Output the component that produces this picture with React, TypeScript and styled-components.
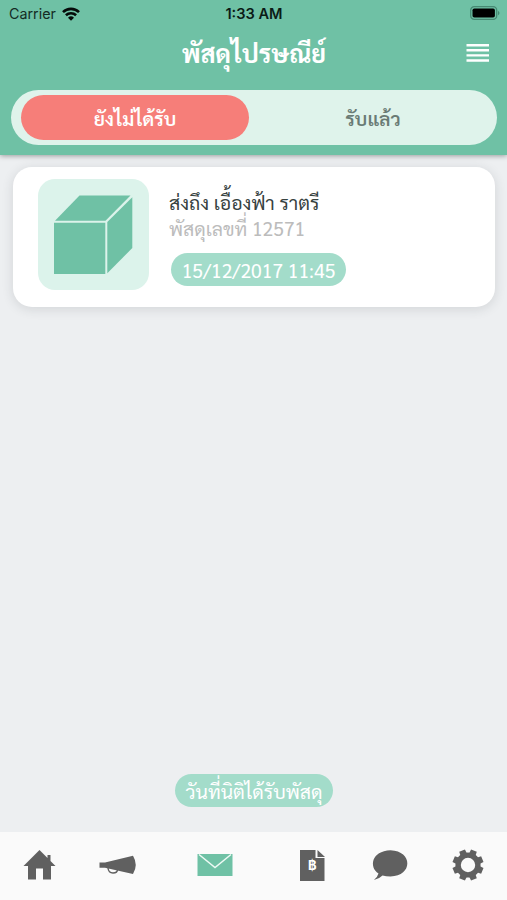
import React from "react";
import styled, { createGlobalStyle } from "styled-components";

const GlobalStyle = createGlobalStyle`
  * { box-sizing: border-box; }
  body { margin: 0; background: #edeff1; font-family: Sarabun, "Noto Sans", sans-serif; }
`;

const Screen = styled.div`
  width: 507px;
  height: 900px;
  display: flex;
  flex-direction: column;
  overflow: hidden;
  background: #edeff1;
`;

const Header = styled.header`
  height: 155px;
  flex: none;
  background: #6fc1a5;
  box-shadow: 0 1px 5px rgba(0, 0, 0, 0.35);
`;

const StatusBar = styled.div`
  height: 28px;
  padding: 0 7px 0 9px;
  display: grid;
  grid-template-columns: 1fr auto 1fr;
  align-items: center;
  font: 14.3px/28px Inter, sans-serif;
  color: #142c24;
`;

const Carrier = styled.div`
  display: flex;
  align-items: center;
  gap: 6px;
`;

const Clock = styled.div`
  font-weight: 600;
  font-size: 14.6px;
  padding-right: 1px;
  color: #0b1b16;
`;

const Battery = styled.svg`
  justify-self: end;
  margin-bottom: 2px;
`;

const TitleBar = styled.div`
  height: 62px;
  padding: 0 17px 12px 18px;
  display: grid;
  grid-template-columns: 24px 1fr 24px;
  align-items: center;
`;

const Label = styled.span<{ $size: number; $color: string; $weight?: number; $line?: number }>`
  display: block;
  font-size: ${(p) => p.$size}px;
  line-height: ${(p) => p.$line ?? 30}px;
  font-weight: ${(p) => p.$weight ?? 400};
  color: ${(p) => p.$color};
  white-space: nowrap;
`;

const Title = styled.h1`
  grid-column: 2;
  margin: 0;
  text-align: center;
`;

const Segments = styled.div`
  height: 55px;
  margin: 0 10px 0 11px;
  padding: 5px 0 5px 10px;
  border-radius: 28px;
  background: #dff3eb;
  display: grid;
  grid-template-columns: 228px 1fr;
`;

const Segment = styled.div<{ $active?: boolean }>`
  border-radius: 23px;
  background: ${(p) => (p.$active ? "#f67e79" : "transparent")};
  display: flex;
  align-items: center;
  justify-content: center;
`;

const Content = styled.main`
  flex: 1;
  padding: 12px 12px 25px 13px;
  display: flex;
  flex-direction: column;
  justify-content: space-between;
  align-items: center;
`;

const Card = styled.article`
  width: 100%;
  height: 140px;
  padding: 12px 25px;
  display: flex;
  gap: 20px;
  border-radius: 19px;
  background: #fff;
  box-shadow: 0 2px 12px rgba(40, 50, 60, 0.14);
`;

const Thumb = styled.div`
  width: 111px;
  height: 111px;
  border-radius: 17px;
  background: #dcf3eb;
`;

const Details = styled.div`
  padding-top: 9px;
`;

const Pill = styled.div<{ $width: number; $height: number }>`
  width: ${(p) => p.$width}px;
  height: ${(p) => p.$height}px;
  border-radius: 17px;
  background: #a3dcca;
  display: flex;
  align-items: center;
  justify-content: center;
`;

const DateRow = styled.div`
  padding: 12px 0 0 2px;
`;

const TabBar = styled.nav`
  height: 68px;
  flex: none;
  background: #fafafa;
  display: flex;
  align-items: center;
`;

const Tab = styled.div<{ $width: number }>`
  width: ${(p) => p.$width}px;
  height: 68px;
`;

const Wifi = () => (
  <svg width="18" height="14" viewBox="0 0 18 14" fill="none" stroke="#050b09" strokeWidth="2.6">
    <path d="M1 5.1A11.5 11.5 0 0 1 17 5.1" />
    <path d="M3.9 8.3A7.4 7.4 0 0 1 14.1 8.3" />
    <path d="M9 13.7L6 10.7A4.3 4.3 0 0 1 12 10.7Z" fill="#050b09" stroke="none" />
  </svg>
);

const gearTeeth = [0, 45, 90, 135, 180, 225, 270, 315];

export default function App() {
  return (
    <>
      <GlobalStyle />
      <Screen>
        <Header>
          <StatusBar>
            <Carrier>Carrier <Wifi /></Carrier>
            <Clock>1:33 AM</Clock>
            <Battery width="30" height="14" viewBox="0 0 30 14">
              <rect x=".7" y=".7" width="26" height="12.6" rx="3.6" fill="none" stroke="#468a73" strokeWidth="1.3" />
              <rect x="2.5" y="2.5" width="22.4" height="9" rx="1.8" fill="#000" />
              <path d="M28 4.7Q31 7 28 9.3Z" fill="#468a73" />
            </Battery>
          </StatusBar>
          <TitleBar>
            <Title><Label $size={25} $weight={700} $color="#fff">พัสดุไปรษณีย์</Label></Title>
            <svg width="24" height="20" viewBox="0 0 24 20" stroke="#fff" strokeWidth="2.4">
              <path d="M.5 2.2H23M.5 7.3H23M.5 12.4H23M.5 17.5H23" />
            </svg>
          </TitleBar>
          <Segments>
            <Segment $active><Label $size={19.3} $weight={600} $color="#fff">ยังไม่ได้รับ</Label></Segment>
            <Segment><Label $size={19.3} $weight={600} $color="#6a7b75">รับแล้ว</Label></Segment>
          </Segments>
        </Header>
        <Content>
          <Card>
            <Thumb>
              <svg width="111" height="111" viewBox="38 179 111 111" fill="#6fc1a5">
                <path d="M55 220.800L79.500 195.500H130.500L105.500 220.800Z" />
                <path d="M54 222.800H105.300V274H54Z" />
                <path d="M107.300 222L132.300 197.300V248L107.300 273.300Z" />
              </svg>
            </Thumb>
            <Details>
              <Label $size={19.4} $line={28} $color="#37423f">ส่งถึง เอื้องฟ้า ราตรี</Label>
              <Label $size={19.4} $line={25} $color="#bcbcbc">พัสดุเลขที่ 12571</Label>
              <DateRow>
                <Pill $width={175} $height={33}><Label $size={19.4} $color="#fff">15/12/2017 11:45</Label></Pill>
              </DateRow>
            </Details>
          </Card>
          <Pill $width={158} $height={33}><Label $size={19.4} $color="#fff">วันที่นิติได้รับพัสดุ</Label></Pill>
        </Content>
        <TabBar>
          <Tab $width={80}>
            <svg width="80" height="68" viewBox="0 832 80 68" fill="#606060">
              <path d="M23.500 866L39.500 850L47.500 858V855H50.500V861L55.500 866H51V879.500H43V868.500H36V879.500H28V866Z" />
            </svg>
          </Tab>
          <Tab $width={80}>
            <svg width="80" height="68" viewBox="80 832 80 68" fill="#606060">
              <path d="M99.500 862.500H105L133 855.800Q138.500 865 133 874L105 867.700H99.500Z" />
              <path d="M108 868Q108.500 873 113 873T117.500 869.500" fill="none" stroke="#606060" strokeWidth="1.4" />
            </svg>
          </Tab>
          <Tab $width={110}>
            <svg width="110" height="68" viewBox="160 832 110 68">
              <rect x="197.500" y="854" width="35" height="22" fill="#6fc1a5" />
              <path d="M199 854.500L215 867.500L231 854.500" fill="none" stroke="#eefaf5" strokeWidth="1.5" />
            </svg>
          </Tab>
          <Tab $width={80}>
            <svg width="80" height="68" viewBox="270 832 80 68" fill="#606060">
              <path d="M300 850H315.500V858H324.500V881H300Z" />
              <path d="M317.500 850L325 857H317.500Z" />
              <text x="312.200" y="870" textAnchor="middle" fontFamily="Inter" fontWeight="700" fontSize="13" fill="#fff">฿</text>
            </svg>
          </Tab>
          <Tab $width={80}>
            <svg width="80" height="68" viewBox="350 832 80 68" fill="#606060">
              <path d="M374 880Q377.500 877 378.500 873.500C369 867.500 371 851 390.500 850.300C413 851 413 876 390.500 876.500Q386 876.500 382.500 875.500Q379 879 374 880Z" />
            </svg>
          </Tab>
          <Tab $width={77}>
            <svg width="77" height="68" viewBox="430 832 77 68" fill="#606060">
              <circle cx="468" cy="865" r="9.900" fill="none" stroke="#606060" strokeWidth="5.400" />
              {gearTeeth.map((a) => (
                <path key={a} d="M464.500 855L464.900 849.500H471.100L471.500 855Z" transform={`rotate(${a + 22.5} 468 865)`} />
              ))}
            </svg>
          </Tab>
        </TabBar>
      </Screen>
    </>
  );
}
